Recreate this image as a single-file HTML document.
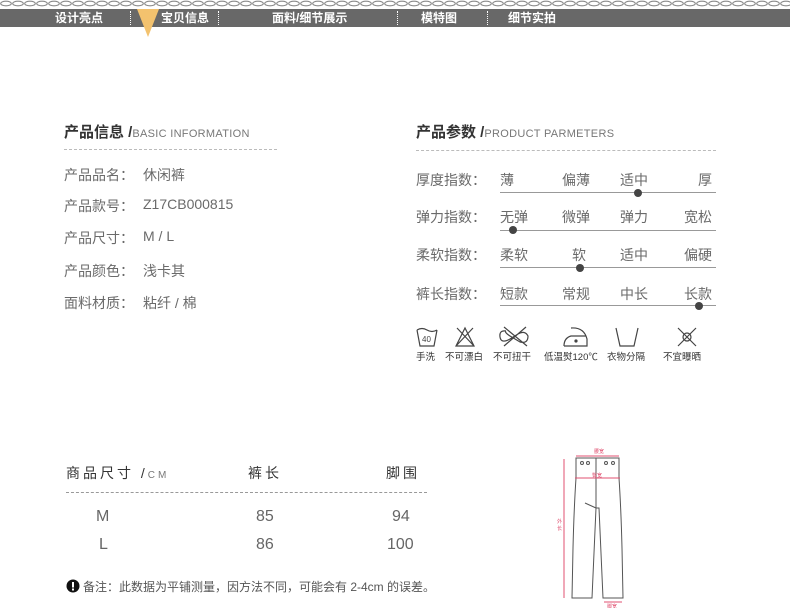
<!DOCTYPE html>
<html><head><meta charset="utf-8"><style>
*{margin:0;padding:0;box-sizing:border-box}
body{width:790px;height:611px;background:#fff;position:relative;overflow:hidden;font-family:"Liberation Sans","Noto Sans CJK SC",sans-serif;color:#555}
.a{position:absolute;white-space:nowrap}
.nav{position:absolute;left:0;top:9px;width:790px;height:18px;background:#686868}
.nav span{position:absolute;top:1px;color:#fff;font-size:12px;font-weight:bold;line-height:16px}
.dv{position:absolute;top:2px;height:14px;border-left:1px dotted #fff}
.t{font-size:15px;font-weight:bold;color:#333}
.t small{font-size:11px;font-weight:normal;color:#777;letter-spacing:.3px}
.r{font-size:14px;color:#6a6a6a}
.v{position:absolute;left:143px;font-size:14px;color:#6a6a6a;white-space:nowrap}
.dash{position:absolute;border-top:1px dashed #bbb;height:0}
.ln{position:absolute;left:500px;width:216px;height:1px;background:#999}
.dot{position:absolute;width:8px;height:8px;border-radius:50%;background:#444}
.ic{font-size:9.5px;color:#333;top:349px}
</style></head><body>
<svg class="a" style="left:0;top:0" width="790" height="8"><defs><pattern id="c" width="12" height="8" patternUnits="userSpaceOnUse"><ellipse cx="6" cy="3.5" rx="5.3" ry="2.3" fill="none" stroke="#888" stroke-width="1.1"/></pattern></defs><rect width="790" height="8" fill="url(#c)"/></svg>
<div class="nav">
<span style="left:55px">设计亮点</span><div class="dv" style="left:130px"></div>
<span style="left:161px">宝贝信息</span><div class="dv" style="left:218px"></div>
<span style="left:272px">面料/细节展示</span><div class="dv" style="left:397px"></div>
<span style="left:421px">模特图</span><div class="dv" style="left:487px"></div>
<span style="left:508px">细节实拍</span>
</div>
<svg class="a" style="left:136px;top:9px" width="24" height="28"><polygon points="1,0 23,0 12,28" fill="#f3c26e"/></svg>

<div class="a t" style="left:64px;top:121px">产品信息 /<small>BASIC INFORMATION</small></div>
<div class="dash" style="left:64px;top:149px;width:213px"></div>
<div class="a r" style="left:64px;top:165px">产品品名：</div><div class="v" style="top:165px">休闲裤</div>
<div class="a r" style="left:64px;top:196px">产品款号：</div><div class="v" style="top:196px">Z17CB000815</div>
<div class="a r" style="left:64px;top:228px">产品尺寸：</div><div class="v" style="top:228px">M / L</div>
<div class="a r" style="left:64px;top:261px">产品颜色：</div><div class="v" style="top:261px">浅卡其</div>
<div class="a r" style="left:64px;top:293px">面料材质：</div><div class="v" style="top:293px">粘纤 / 棉</div>

<div class="a t" style="left:416px;top:121px">产品参数 /<small>PRODUCT PARMETERS</small></div>
<div class="dash" style="left:416px;top:150px;width:300px"></div>

<div class="a r" style="left:416px;top:170px">厚度指数：</div>
<div class="a r" style="left:500px;top:170px">薄</div><div class="a r" style="left:562px;top:170px">偏薄</div><div class="a r" style="left:620px;top:170px">适中</div><div class="a r" style="left:698px;top:170px">厚</div>
<div class="ln" style="top:192px"></div><div class="dot" style="left:634px;top:189px"></div>

<div class="a r" style="left:416px;top:207px">弹力指数：</div>
<div class="a r" style="left:500px;top:207px">无弹</div><div class="a r" style="left:562px;top:207px">微弹</div><div class="a r" style="left:620px;top:207px">弹力</div><div class="a r" style="left:684px;top:207px">宽松</div>
<div class="ln" style="top:230px"></div><div class="dot" style="left:509px;top:226px"></div>

<div class="a r" style="left:416px;top:245px">柔软指数：</div>
<div class="a r" style="left:500px;top:245px">柔软</div><div class="a r" style="left:572px;top:245px">软</div><div class="a r" style="left:620px;top:245px">适中</div><div class="a r" style="left:684px;top:245px">偏硬</div>
<div class="ln" style="top:267px"></div><div class="dot" style="left:576px;top:264px"></div>

<div class="a r" style="left:416px;top:284px">裤长指数：</div>
<div class="a r" style="left:500px;top:284px">短款</div><div class="a r" style="left:562px;top:284px">常规</div><div class="a r" style="left:620px;top:284px">中长</div><div class="a r" style="left:684px;top:284px">长款</div>
<div class="ln" style="top:305px"></div><div class="dot" style="left:695px;top:302px"></div>

<svg class="a" style="left:414px;top:322px" width="310" height="26" fill="none" stroke="#444" stroke-width="1.2">
<path d="M3 8 L6 24 H20 L23 8 M3 8 Q8 5 13 8 Q18 11 23 8"/><text x="8" y="20" font-size="8" fill="#444" stroke="none">40</text>
<path d="M42 24 L51 6 L60 24 Z M43 6 L60 24 M59 6 L42 24"/>
<path d="M92 9 Q85 8 86 15 Q87 22 96 17 L104 12 Q111 8 114 14 Q114 22 106 20 L96 14 Q90 10 92 9 M90 5 L113 24 M112 5 L90 24"/>
<path d="M150 24 H173 V17 Q170 5 157 6 M150 24 Q150 16 157 14 H172"/><circle cx="162" cy="19" r="1" fill="#444"/>
<path d="M202 6 L206 24 H220 L224 6"/>
<path d="M264 6 L282 24 M282 6 L264 24"/><circle cx="273" cy="15" r="4"/>
</svg>
<div class="a ic" style="left:416px">手洗</div>
<div class="a ic" style="left:445px">不可漂白</div>
<div class="a ic" style="left:493px">不可扭干</div>
<div class="a ic" style="left:544px">低温熨120℃</div>
<div class="a ic" style="left:607px">衣物分隔</div>
<div class="a ic" style="left:663px">不宜曝晒</div>

<div class="a" style="left:66px;top:463px;font-size:14px;color:#333;letter-spacing:3px">商品尺寸 /<span style="font-size:10px;color:#777">CM</span></div>
<div class="a" style="left:248px;top:463px;font-size:14px;color:#333;letter-spacing:3px">裤长</div>
<div class="a" style="left:386px;top:463px;font-size:14px;color:#333;letter-spacing:3px">脚围</div>
<div class="dash" style="left:66px;top:492px;width:361px;border-color:#999"></div>
<div class="a" style="left:96px;top:508px;font-size:16px;color:#666">M</div>
<div class="a" style="left:256px;top:508px;font-size:16px;color:#666">85</div>
<div class="a" style="left:392px;top:508px;font-size:16px;color:#666">94</div>
<div class="a" style="left:99px;top:536px;font-size:16px;color:#666">L</div>
<div class="a" style="left:256px;top:536px;font-size:16px;color:#666">86</div>
<div class="a" style="left:387px;top:536px;font-size:16px;color:#666">100</div>

<svg class="a" style="left:66px;top:579px" width="14" height="14"><circle cx="7" cy="7" r="6.5" fill="#111"/><rect x="6" y="3" width="2" height="5.5" fill="#fff"/><rect x="6" y="9.5" width="2" height="2" fill="#fff"/></svg>
<div class="a" style="left:83px;top:578px;font-size:12px;color:#555">备注：此数据为平铺测量，因方法不同，可能会有 2-4cm 的误差。</div>

<svg class="a" style="left:550px;top:448px" width="90" height="160" fill="none" stroke-width="1">
<path d="M26 10 L26 30 Q24 60 23 100 L22 150 H42 L46 60 L49 60 L53 150 H73 L72 100 Q71 60 69 30 L69 10 Z M46 10 V60 M35 55 L46 60" stroke="#555"/>
<circle cx="32" cy="15" r="1.5" stroke="#555"/><circle cx="38" cy="15" r="1.5" stroke="#555"/><circle cx="56" cy="15" r="1.5" stroke="#555"/><circle cx="63" cy="15" r="1.5" stroke="#555"/>
<path d="M26 8 H69 M25 30 H70 M14 11 V150 M54 154 H72" stroke="#e05070"/>
<text x="44" y="5" font-size="5" fill="#e05070" stroke="none">腰宽</text>
<text x="42" y="29" font-size="5" fill="#e05070" stroke="none">臀宽</text>
<text x="7" y="75" font-size="5" fill="#e05070" stroke="none">外</text><text x="7" y="82" font-size="5" fill="#e05070" stroke="none">长</text>
<text x="57" y="160" font-size="5" fill="#e05070" stroke="none">脚宽</text>
</svg>
</body></html>
